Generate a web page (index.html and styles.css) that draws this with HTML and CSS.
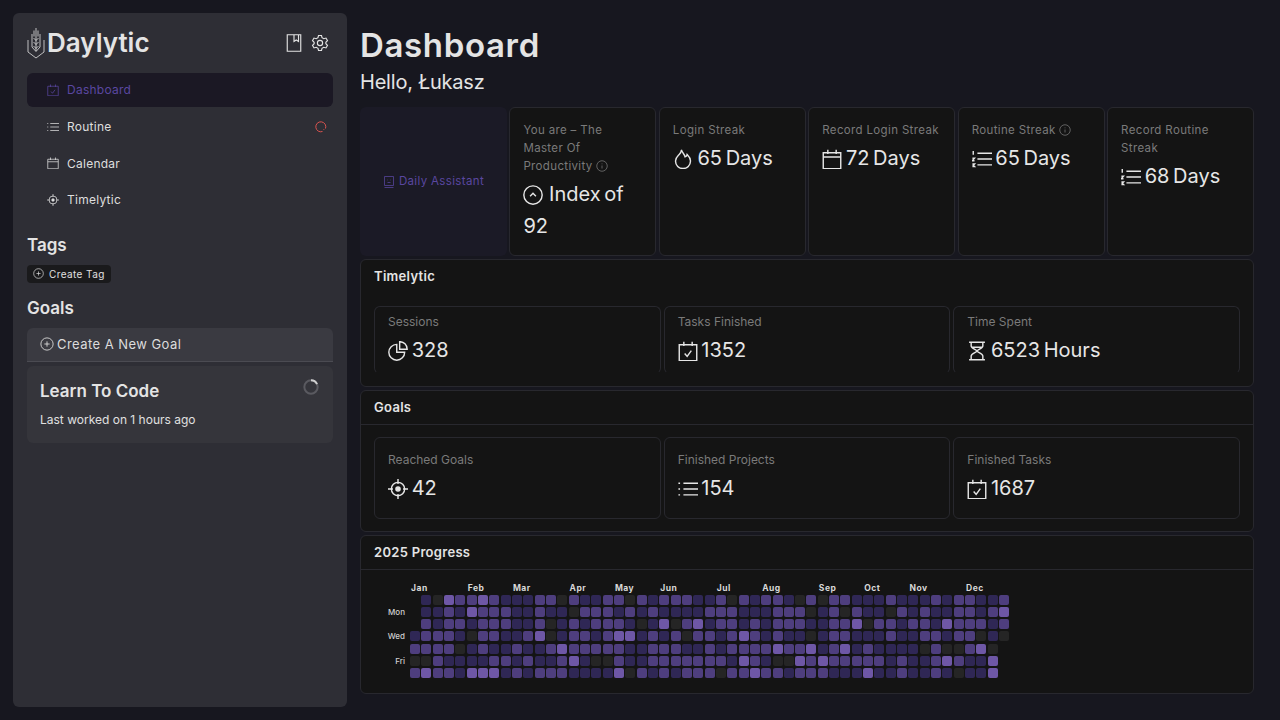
FILE: index.html
```html
<!DOCTYPE html>
<html lang="en">
<head>
  <meta charset="UTF-8">
  <meta name="viewport" content="width=device-width, initial-scale=1.0">
  <title>Daylytic</title>
  <link rel="stylesheet" href="styles.css">
</head>
<body>

  <svg class="sprites" width="0" height="0">
    <symbol id="i-list" viewBox="0 0 24 24"><path d="M6.500 5H24M6.500 12H24M6.500 19H24M.5 5h2M.5 12h2M.5 19h2"/></symbol>
    <symbol id="i-ordered" viewBox="0 0 24 24"><path d="M6.500 5H24M6.500 12H24M6.500 19H24M1.500 2.500V7M.5 11h2.500L.5 14h2.500M.5 18h2.500L1.500 19.500 3 21H.5"/></symbol>
    <symbol id="i-cal" viewBox="0 0 24 24"><path d="M1.500 4.500h21v19h-21zM1.500 9.500h21M7 1v5M17 1v5"/></symbol>
    <symbol id="i-check" viewBox="0 0 24 24"><path d="M1.500 4.500h21v19h-21zM7 1v5M17 1v5M8 15l3 3.500 5-7"/></symbol>
    <symbol id="i-target" viewBox="0 0 24 24"><circle cx="12" cy="12" r="8"/><circle cx="12" cy="12" r="2.500" class="fill"/><path d="M12 0v6M12 18v6M0 12h6M18 12h6"/></symbol>
    <symbol id="i-plus" viewBox="0 0 24 24"><circle cx="12" cy="12" r="10.500"/><path d="M12 7.500v9M7.500 12h9"/></symbol>
    <symbol id="i-info" viewBox="0 0 24 24"><circle cx="12" cy="12" r="10.500"/><path d="M12 11v6M12 7v1.500"/></symbol>
  </svg>

  <aside class="sidebar">
    <div class="brand">
      <svg class="logo" viewBox="0 0 18 32">
        <path d="M1 13v12l8 6 8-6V13"/>
        <path d="M5 7v13l4 4.500 4-4.500V7M9 1v23M7 3.500v6M11 3.500v6M6.500 11 9 13.500l2.500-2.500M6.500 15 9 17.500l2.500-2.500M6.500 19 9 21.500l2.500-2.500"/>
      </svg>
      <span class="brand-name">Daylytic</span>
      <div class="brand-tools">
        <svg class="tool" viewBox="0 0 24 24"><path d="M3 1h18v22H3zM12 1v9l3-2 3 2V1"/></svg>
        <svg class="tool" viewBox="0 0 24 24"><circle cx="12" cy="12" r="3.500"/><path d="M10 2h4l.7 3 2.300 1.300 3-.9 2 3.500-2.200 2.100v2l2.200 2.100-2 3.500-3-.9-2.300 1.300-.7 3h-4l-.7-3L7 17.700l-3 .9-2-3.500L4.200 13v-2L2 8.900l2-3.500 3 .9 2.300-1.300z"/></svg>
      </div>
    </div>

    <nav class="nav">
      <a class="nav-item active">
        <svg class="nav-icon"><use href="#i-check"/></svg>Dashboard
      </a>
      <a class="nav-item">
        <svg class="nav-icon"><use href="#i-list"/></svg>Routine
        <svg class="nav-alert" viewBox="0 0 24 24"><path d="M15 21A10 10 0 1 1 21 15"/><path d="M17 17h1.500"/></svg>
      </a>
      <a class="nav-item">
        <svg class="nav-icon"><use href="#i-cal"/></svg>Calendar
      </a>
      <a class="nav-item">
        <svg class="nav-icon"><use href="#i-target"/></svg>Timelytic
      </a>
    </nav>

    <h3 class="side-title tags-title">Tags</h3>
    <button class="tag-btn"><svg class="tag-icon"><use href="#i-plus"/></svg>Create Tag</button>

    <h3 class="side-title goals-title">Goals</h3>
    <button class="goal-btn"><svg class="goal-icon"><use href="#i-plus"/></svg>Create A New Goal</button>
    <div class="goal-card">
      <div class="goal-head">
        <span class="goal-name">Learn To Code</span>
        <svg class="spinner" viewBox="0 0 24 24"><circle cx="12" cy="12" r="10"/><path d="M12 2a10 10 0 0 1 9 5.700"/></svg>
      </div>
      <p class="goal-sub">Last worked on 1 hours ago</p>
    </div>
  </aside>

  <main class="main">
    <h1 class="page-title">Dashboard</h1>
    <p class="hello">Hello, Łukasz</p>

    <section class="stats">
      <div class="assistant">
        <svg class="assistant-icon" viewBox="0 0 24 24"><path d="M3 1h18v18H3zM3 23h18M9 8h1M14 8h1M9 13h6"/></svg>
        Daily Assistant
      </div>
      <div class="stat">
        <div class="stat-label">You are – The Master Of Productivity <svg class="info"><use href="#i-info"/></svg></div>
        <div class="stat-value"><svg class="val-icon gap-2" viewBox="0 0 24 24"><circle cx="12" cy="12" r="11"/><path d="M8.500 13.500 12 10l3.500 3.500"/></svg> Index of 92</div>
      </div>
      <div class="stat">
        <div class="stat-label">Login Streak</div>
        <div class="stat-value"><svg class="val-icon gap-1" viewBox="0 0 24 24"><path d="M10 1c1.500 4 4 5.500 4.500 8.500 1.500-.5 2.300-1.500 2.500-3 2.500 2.500 4 5.500 4 8a9 9 0 0 1-18 0c0-3 1.500-5 3.500-7 2-2 4-3.500 3.500-6.500z"/></svg> 65 Days</div>
      </div>
      <div class="stat">
        <div class="stat-label">Record Login Streak</div>
        <div class="stat-value"><svg class="val-icon"><use href="#i-cal"/></svg> 72 Days</div>
      </div>
      <div class="stat">
        <div class="stat-label">Routine Streak <svg class="info"><use href="#i-info"/></svg></div>
        <div class="stat-value"><svg class="val-icon"><use href="#i-ordered"/></svg> 65 Days</div>
      </div>
      <div class="stat">
        <div class="stat-label">Record Routine Streak</div>
        <div class="stat-value"><svg class="val-icon"><use href="#i-ordered"/></svg> 68 Days</div>
      </div>
    </section>

    <section class="panel">
      <h4 class="panel-title no-line">Timelytic</h4>
      <div class="panel-cards">
        <div class="card short">
          <div class="card-label">Sessions</div>
          <div class="card-value"><svg class="val-icon" viewBox="0 0 24 24"><path d="M10.500 4a9.500 9.500 0 1 0 9.500 9.500h-9.500z"/><path d="M14 .8a9 9 0 0 1 9 9h-9z"/></svg> 328</div>
        </div>
        <div class="card short">
          <div class="card-label">Tasks Finished</div>
          <div class="card-value"><svg class="val-icon"><use href="#i-check"/></svg> 1352</div>
        </div>
        <div class="card short">
          <div class="card-label">Time Spent</div>
          <div class="card-value"><svg class="val-icon" viewBox="0 0 24 24"><path d="M2.500 1.500h19M2.500 22.500h19M5 1.500V6c0 3 7 4.500 7 6s-7 3-7 6v4.500M19 1.500V6c0 3-7 4.500-7 6s7 3 7 6v4.500M6 7.500h12"/></svg> 6523 Hours</div>
        </div>
      </div>
    </section>

    <section class="panel">
      <h4 class="panel-title">Goals</h4>
      <div class="panel-cards">
        <div class="card">
          <div class="card-label">Reached Goals</div>
          <div class="card-value"><svg class="val-icon"><use href="#i-target"/></svg> 42</div>
        </div>
        <div class="card">
          <div class="card-label">Finished Projects</div>
          <div class="card-value"><svg class="val-icon"><use href="#i-list"/></svg> 154</div>
        </div>
        <div class="card">
          <div class="card-label">Finished Tasks</div>
          <div class="card-value"><svg class="val-icon"><use href="#i-check"/></svg> 1687</div>
        </div>
      </div>
    </section>

    <section class="panel">
      <h4 class="panel-title">2025 Progress</h4>
      <div class="heatmap">
        <div class="months" id="months"></div>
        <div class="heat-body">
          <div class="days">
            <span></span><span>Mon</span><span></span><span>Wed</span><span></span><span>Fri</span><span></span>
          </div>
          <div class="cells" id="cells"></div>
        </div>
      </div>
    </section>
  </main>

  <script>
    // one string per weekday, one digit per week, "x" = no cell
    const rows = [
      "x104334311133031133031333" + "1130313310303311131113133113",
      "x113143331131103331313111" + "1333111333013031103131133134",
      "x313313331130131333101403" + "4133131333113340331331433313",
      "1333103311340133134413130" + "3313431311013311131133133010",
      "3333013113113433333113331" + "131333343341341311110300340x",
      "0031111331311341003113333" + "333143100434333331311343114x",
      "3433144413133311114031313" + "330334331333111411311310114x"
    ];

    const months = [["Jan", 0], ["Feb", 5], ["Mar", 9], ["Apr", 14], ["May", 18], ["Jun", 22],
                    ["Jul", 27], ["Aug", 31], ["Sep", 36], ["Oct", 40], ["Nov", 44], ["Dec", 49]];

    const monthBox = document.getElementById("months");
    months.forEach(function(m) {
      const s = document.createElement("span");
      s.innerText = m[0];
      s.style.gridColumnStart = m[1] + 1;
      monthBox.appendChild(s);
    });

    const cellBox = document.getElementById("cells");
    for (let c = 0; c < 53; c++) {
      for (let r = 0; r < 7; r++) {
        const d = document.createElement("div");
        d.className = "cell l" + rows[r].charAt(c);
        cellBox.appendChild(d);
      }
    }
  </script>

</body>
</html>
```

FILE: styles.css
```css
* {
  box-sizing: border-box;
}
body {
  font-family: Inter, "Noto Sans", sans-serif;
  background-color: #17171f;
  color: #e4e4e4;
  margin: 0;
  padding: 13px 26px 13px 13px;
  height: 720px;
  overflow: hidden;
  display: flex;
  gap: 13px;
  line-height: 1.6;
}
svg {
  fill: none;
  stroke: currentColor;
  stroke-width: 1.5;
  flex-shrink: 0;
}
.sprites {
  position: absolute;
}
.fill {
  fill: currentColor;
}

/* sidebar */
.sidebar {
  width: 334px;
  height: 694px;
  flex-shrink: 0;
  background-color: #2e2e35;
  border-radius: 6px;
  padding: 14px;
}
.brand {
  display: flex;
  align-items: center;
  height: 32px;
  color: #e4e4e4;
}
.logo {
  width: 18px;
  height: 32px;
  stroke-width: .8;
  margin-right: 2px;
}
.brand-name {
  font-size: 26px;
  font-weight: 600;
}
.brand-tools {
  margin-left: auto;
  margin-right: 4px;
  display: flex;
  gap: 8px;
}
.tool {
  width: 18px;
  height: 18px;
}
.nav {
  margin-top: 14px;
  display: flex;
  flex-direction: column;
  gap: 2.600px;
}
.nav-item {
  display: flex;
  align-items: center;
  height: 34px;
  padding: 0 6px 0 20px;
  font-size: 12px;
  letter-spacing: .25px;
  border-radius: 6px;
  color: #dedede;
}
.nav-item.active {
  background-color: #1b1824;
  color: #5a47a0;
}
.nav-icon {
  width: 12px;
  height: 12px;
  margin-right: 8px;
}
.nav-alert {
  width: 12px;
  height: 12px;
  margin-left: auto;
  stroke-width: 2;
  color: #d9534f;
}
.side-title {
  font-size: 17px;
  font-weight: 600;
  margin: 0;
  line-height: 24px;
}
.tags-title {
  margin-top: 16px;
}
.tag-btn {
  display: flex;
  align-items: center;
  gap: 5px;
  height: 18px;
  margin-top: 8px;
  padding: 0 6px;
  font-family: inherit;
  font-size: 10px;
  letter-spacing: .4px;
  color: #e0e0e0;
  background-color: #1a1a1c;
  border: none;
  border-radius: 4px;
}
.tag-icon {
  width: 11px;
  height: 11px;
}
.goals-title {
  margin-top: 13px;
}
.goal-btn {
  display: flex;
  align-items: center;
  gap: 3px;
  width: 100%;
  height: 34px;
  margin-top: 8px;
  padding: 0 13px;
  font-family: inherit;
  font-size: 13px;
  letter-spacing: .45px;
  color: #dcdcdc;
  background-color: #3a3a41;
  border: none;
  border-bottom: 1px solid #4b4b52;
  border-radius: 6px 6px 0 0;
}
.goal-icon {
  width: 14px;
  height: 14px;
}
.goal-card {
  margin-top: 4px;
  height: 77px;
  background-color: #35353b;
  border-radius: 6px;
  padding: 13px;
}
.goal-head {
  display: flex;
  justify-content: space-between;
  align-items: flex-start;
}
.goal-name {
  font-size: 17px;
  font-weight: 600;
  line-height: 24px;
}
.spinner {
  width: 16px;
  height: 16px;
  margin-right: 1px;
  stroke-width: 3;
  color: #5a5a60;
}
.spinner path {
  stroke: #d0d0d0;
}
.goal-sub {
  margin: 7px 0 0;
  font-size: 12px;
  color: #e0e0e0;
}

/* main column */
.main {
  flex: 1;
  min-width: 0;
  display: flex;
  flex-direction: column;
  gap: 3px;
}
.page-title {
  font-size: 33px;
  font-weight: 600;
  line-height: 46px;
  letter-spacing: .65px;
  margin: 9px 0 0;
}
.hello {
  font-size: 20px;
  line-height: 22px;
  letter-spacing: -.2px;
  margin: 0 0 11px;
}
.stats {
  display: grid;
  grid-template-columns: repeat(6, 1fr);
  gap: 2.500px;
  height: 149px;
}
.assistant {
  background-color: #1b1a26;
  border-radius: 6px;
  display: flex;
  align-items: center;
  justify-content: center;
  gap: 4px;
  font-size: 11.500px;
  letter-spacing: .35px;
  color: #5a47a0;
}
.assistant-icon {
  width: 12px;
  height: 14px;
}
.stat {
  background-color: #141414;
  border: 1px solid #28282e;
  border-radius: 6px;
  padding: 13px;
}
.stat-label {
  font-size: 11.500px;
  line-height: 18px;
  letter-spacing: .35px;
  color: #7a7a7a;
}
.info {
  width: 12px;
  height: 12px;
  vertical-align: -2px;
}
.stat-value {
  margin-top: 3px;
  font-size: 20px;
  word-spacing: -2px;
  color: #e6e6e6;
}
.val-icon {
  width: 20px;
  height: 20px;
  vertical-align: -4px;
  stroke-width: 1.700;
}
.gap-1 {
  margin-right: 1px;
}
.gap-2 {
  margin-right: 2px;
}
.panel {
  background-color: #141414;
  border: 1px solid #28282e;
  border-radius: 6px;
}
.panel-title {
  margin: 0;
  height: 34px;
  padding: 0 13px;
  font-size: 13px;
  font-weight: 600;
  line-height: 32px;
  letter-spacing: .3px;
  border-bottom: 1px solid #28282e;
}
.panel-title.no-line {
  border-bottom-color: transparent;
}
.panel-cards {
  display: grid;
  grid-template-columns: repeat(3, 1fr);
  gap: 3px;
  padding: 12px 13px;
}
.card {
  height: 82px;
  padding: 12px 13px;
  border: 1px solid #28282e;
  border-radius: 6px;
}
.card.short {
  height: 68px;
  padding-top: 5px;
  border-bottom-color: transparent;
}
.card-label {
  font-size: 12px;
  color: #7a7a7a;
}
.card-value {
  margin-top: 5px;
  font-size: 20px;
  line-height: 28px;
  word-spacing: -2px;
  color: #e6e6e6;
}

/* heatmap */
.heatmap {
  padding: 13px 13px 13px;
}
.months {
  display: grid;
  grid-template-columns: repeat(53, 11.330px);
  margin-left: 36px;
  height: 12px;
  font-size: 8.500px;
  font-weight: 700;
  letter-spacing: .5px;
  line-height: 10px;
  color: #d8d8d8;
}
.months span {
  white-space: nowrap;
  padding-left: 1px;
}
.heat-body {
  display: flex;
  gap: 5px;
}
.days {
  width: 31px;
  display: grid;
  grid-template-rows: repeat(7, 12.170px);
  font-size: 8px;
  font-weight: 500;
  line-height: 10px;
  text-align: right;
  color: #cfcfcf;
}
.cells {
  display: grid;
  grid-auto-flow: column;
  grid-template-columns: repeat(53, 10px);
  grid-template-rows: repeat(7, 10px);
  column-gap: 1.330px;
  row-gap: 2.170px;
}
.cell {
  border-radius: 2px;
}
.l0 { background-color: #252525; }
.l1 { background-color: #2f2755; }
.l3 { background-color: #4e3e7e; }
.l4 { background-color: #6e57a6; }
.lx { background-color: transparent; }
```
